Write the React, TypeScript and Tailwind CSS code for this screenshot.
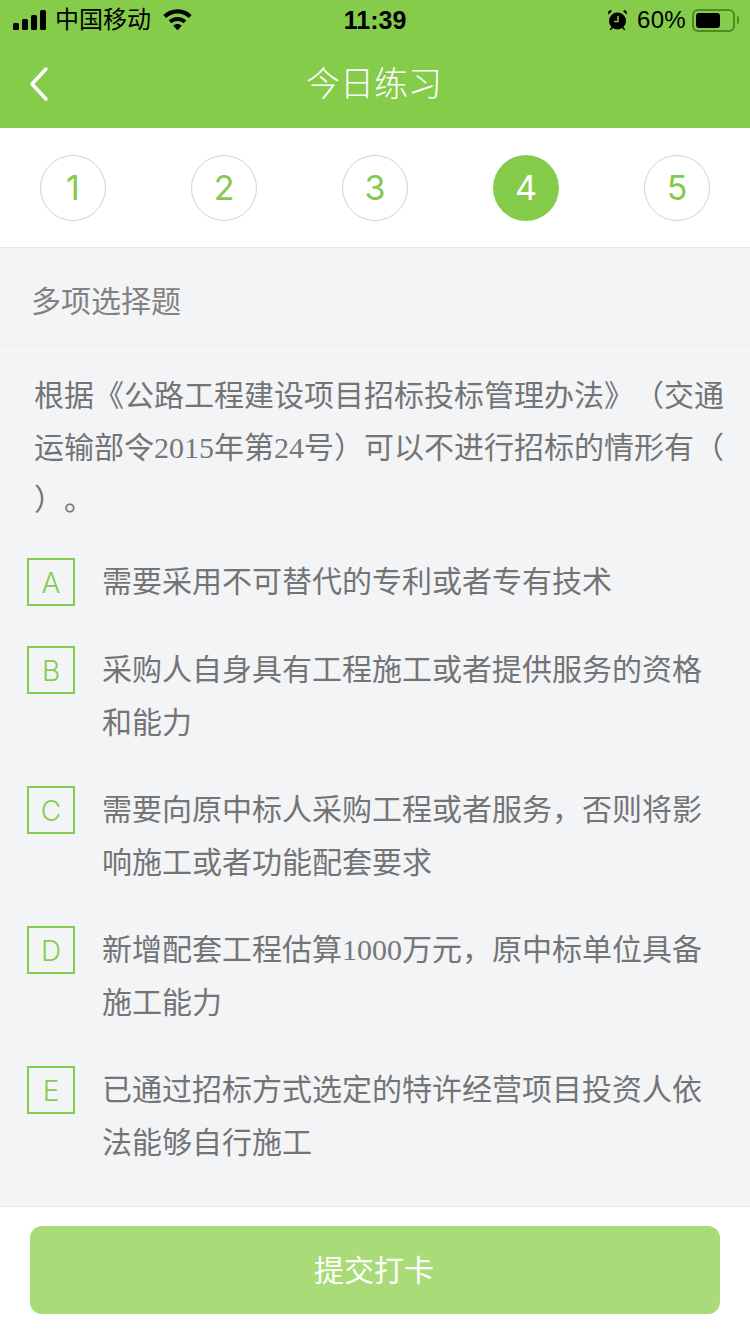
const CJK = "font-['Liberation_Sans','Noto_Sans_CJK_SC',sans-serif]";
const SERIF = "font-['Liberation_Serif',serif] font-normal text-[#77787a]";

// 题目选项
const options = [
  { key: "A", text: <>需要采用不可替代的专利或者专有技术</> },
  { key: "B", text: <>采购人自身具有工程施工或者提供服务的资格<br />和能力</> },
  { key: "C", text: <>需要向原中标人采购工程或者服务，否则将影<br />响施工或者功能配套要求</> },
  { key: "D", text: <>新增配套工程估算<span className={SERIF}>1000</span>万元，原中标单位具备<br />施工能力</> },
  { key: "E", text: <>已通过招标方式选定的特许经营项目投资人依<br />法能够自行施工</> },
];

function StatusBar() {
  return (
    <div className="relative flex h-10 items-center justify-between pl-[13px] pr-[11px] text-black">
      <div className="flex items-center">
        <svg width="34" height="20" viewBox="0 0 34 20" fill="currentColor">
          <rect x="0" y="13" width="6" height="7" rx="1.5" />
          <rect x="9" y="9" width="6" height="11" rx="1.5" />
          <rect x="18" y="5" width="6" height="15" rx="1.5" />
          <rect x="27" y="0" width="6" height="20" rx="1.5" />
        </svg>
        <span className="ml-[8px] text-[24px] leading-none">中国移动</span>
        <svg className="ml-[12px]" width="29" height="22" viewBox="0 0 30 22" fill="currentColor">
          <path d="M15 0C9.3 0 4.2 2.2.4 5.9l2.8 3C6.3 6 10.4 4.2 15 4.2S23.7 6 26.8 8.9l2.8-3C25.8 2.2 20.7 0 15 0z" />
          <path d="M15 7.8c-3.5 0-6.7 1.4-9.1 3.6l2.9 3C10.4 12.9 12.6 12 15 12s4.6.9 6.2 2.4l2.9-3C21.700 9.200 18.500 7.800 15 7.800z" />
          <path d="M15 15.200c-1.700 0-3.200.7-4.400 1.700L15 21.500l4.400-4.600c-1.200-1-2.700-1.700-4.400-1.700z" />
        </svg>
      </div>
      <span className="absolute left-0 right-0 text-center text-[25px] font-semibold leading-none">11:39</span>
      <div className="flex items-center">
        <svg width="21" height="22" viewBox="0 0 20 22" fill="currentColor">
          <circle cx="10" cy="12" r="8.500" />
          <path d="M1 5.500 4.500 2 2.500 1 .500 3zM19 5.500 15.500 2l2-1 2 2zM4 18l-2 3h1.500l2-2zM16 18l2 3h-1.500l-2-2z" />
          <path d="M10.500 7v5.500H6.500" fill="none" stroke="#86cc4b" strokeWidth="1.500" />
        </svg>
        <span className="ml-[9px] text-[24px] leading-none tracking-[0.3px]">60%</span>
        <div className="ml-[6px] flex h-[23px] w-[43px] items-center rounded-[6px] border-2 border-[#4f8a26] p-[2px]">
          <div className="h-full w-[24px] rounded-[3px] bg-black" />
        </div>
        <div className="ml-[2px] h-[8px] w-[2px] rounded-r-full bg-[#4f8a26]" />
      </div>
    </div>
  );
}

function NavBar() {
  return (
    <div className="relative flex h-[88px] items-center justify-center pr-[2px] text-white">
      <svg className="absolute left-[28px] top-[26px]" width="22" height="36" viewBox="0 0 22 36" fill="none" stroke="currentColor" strokeWidth="3.5" strokeLinecap="round" strokeLinejoin="round">
        <polyline points="18,3 4,18 18,33" />
      </svg>
      <span className="text-[34px] font-light leading-none">今日练习</span>
    </div>
  );
}

function Steps() {
  return (
    <div className="flex h-[120px] shrink-0 items-center justify-between border-b border-[#e8e8e8] bg-white px-[40px]">
      {[1, 2, 3, 4, 5].map((n) => (
        <div
          key={n}
          className={
            n === 4
              ? "flex h-[66px] w-[66px] items-center justify-center rounded-full bg-[#86cc4b] font-['Inter',sans-serif] text-[34px] text-white"
              : "flex h-[66px] w-[66px] items-center justify-center rounded-full border border-[#d2d2d2] font-['Inter',sans-serif] text-[34px] text-[#86c94f]"
          }
        >
          {n}
        </div>
      ))}
    </div>
  );
}

function Option({ letter, children }: { letter: string; children: React.ReactNode }) {
  return (
    <div className="mb-[37px] flex min-h-[51px] items-start">
      <div className="flex h-[48px] w-[48px] shrink-0 items-center justify-center border-2 border-[#86cc4b] pt-[2px] font-['Inter',sans-serif] text-[28px] font-light text-[#86cc4b]">
        {letter}
      </div>
      <div className="-mt-[3px] ml-[27px] whitespace-nowrap text-[30px] leading-[53px] text-[#737476]">{children}</div>
    </div>
  );
}

export default function App() {
  return (
    <div className={`flex h-[1334px] w-[750px] flex-col overflow-hidden bg-[#f3f4f6] [text-spacing-trim:space-all] ${CJK}`}>
      <div className="h-[128px] shrink-0 bg-[#86cc4b]">
        <StatusBar />
        <NavBar />
      </div>
      <Steps />
      <div className="flex h-[98px] shrink-0 items-center border-b border-[#eeeeee] pl-[31px] pt-[10px] text-[30px] leading-none text-[#828282]">
        多项选择题
      </div>
      <div className="shrink-0 whitespace-nowrap px-[34px] pt-[24px] text-[30px] leading-[52px] text-[#737476]">
        根据《公路工程建设项目招标投标管理办法》（交通
        <br />
        运输部令<span className={SERIF}>2015</span>年第<span className={SERIF}>24</span>号）可以不进行招标的情形有（
        <br />
        ）。
      </div>
      <div className="flex-1 pl-[27px] pt-[32px]">
        {options.map((o) => (
          <Option key={o.key} letter={o.key}>
            {o.text}
          </Option>
        ))}
      </div>
      <div className="flex h-[128px] shrink-0 items-start border-t border-[#e8e8e8] bg-white px-[30px] pt-[19px]">
        <button className="flex h-[88px] w-full items-center justify-center rounded-[12px] bg-[#a9db78] pr-[2px] text-[30px] text-white">
          提交打卡
        </button>
      </div>
    </div>
  );
}
